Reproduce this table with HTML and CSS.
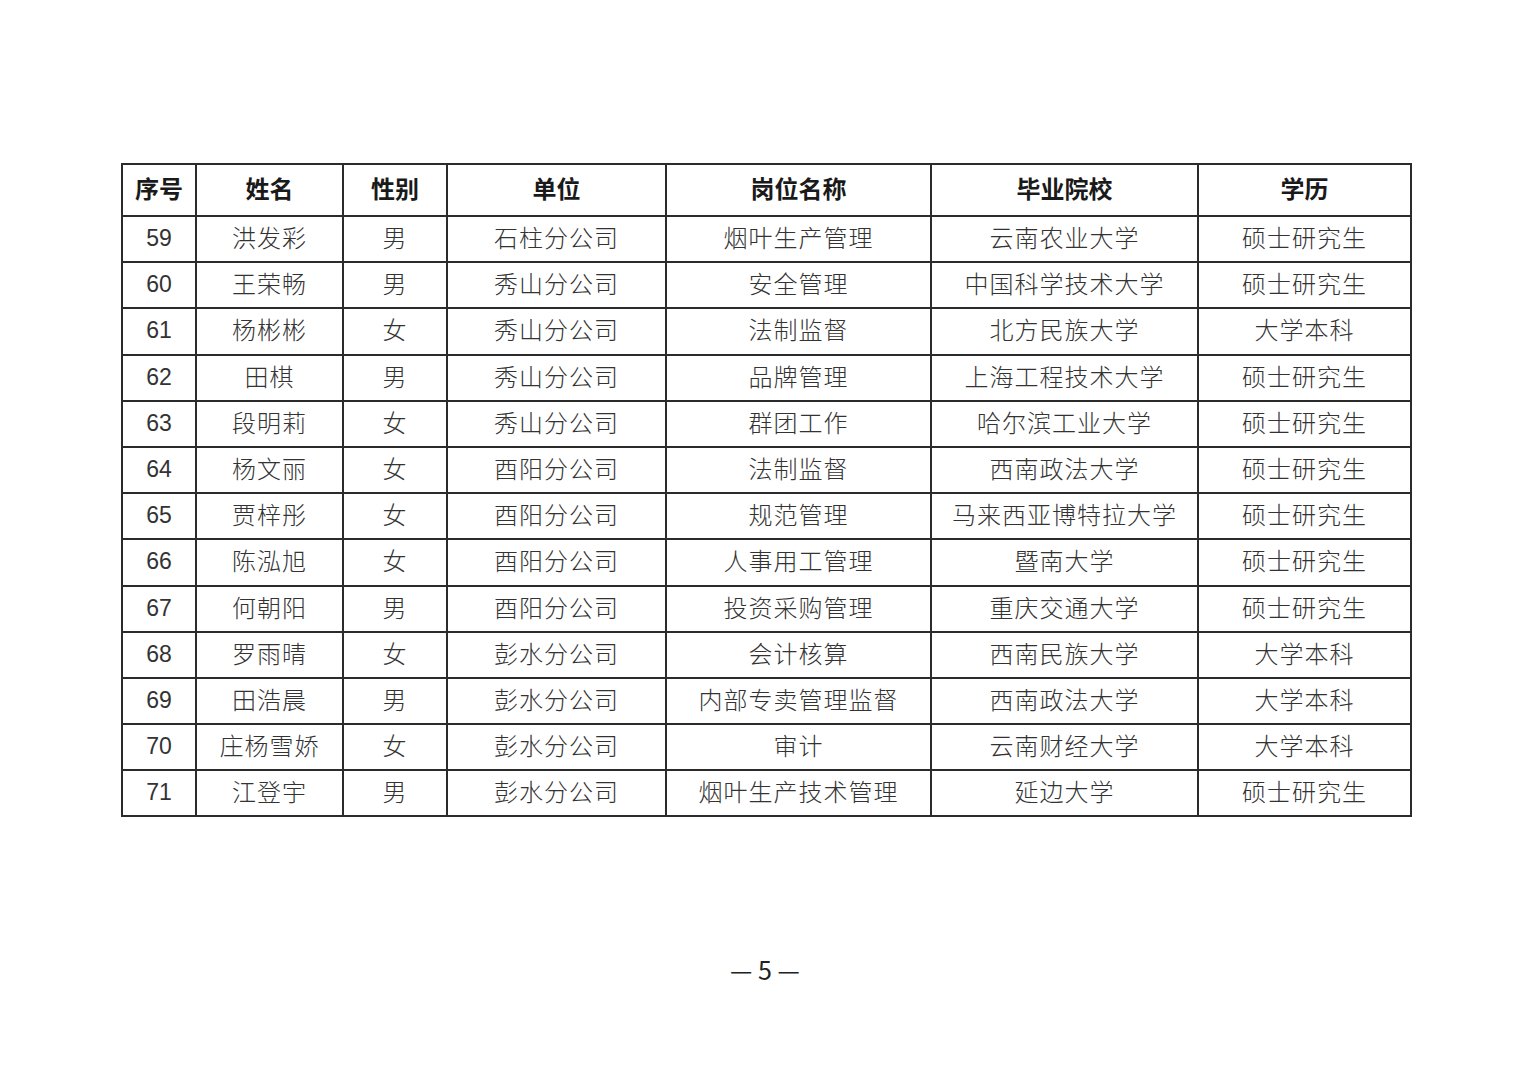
FILE: index.html
```html
<!DOCTYPE html>
<html lang="zh-CN">
<head>
<meta charset="utf-8">
<title>名单</title>
<link rel="stylesheet" href="styles.css">
</head>
<body>
<div class="page">
<table class="list">
<colgroup>
<col class="c1"><col class="c2"><col class="c3"><col class="c4"><col class="c5"><col class="c6"><col class="c7">
</colgroup>
<thead>
<tr><th>序号</th><th>姓名</th><th>性别</th><th>单位</th><th>岗位名称</th><th>毕业院校</th><th>学历</th></tr>
</thead>
<tbody>
<tr><td class="num">59</td><td>洪发彩</td><td>男</td><td>石柱分公司</td><td>烟叶生产管理</td><td>云南农业大学</td><td>硕士研究生</td></tr>
<tr><td class="num">60</td><td>王荣畅</td><td>男</td><td>秀山分公司</td><td>安全管理</td><td>中国科学技术大学</td><td>硕士研究生</td></tr>
<tr><td class="num">61</td><td>杨彬彬</td><td>女</td><td>秀山分公司</td><td>法制监督</td><td>北方民族大学</td><td>大学本科</td></tr>
<tr><td class="num">62</td><td>田棋</td><td>男</td><td>秀山分公司</td><td>品牌管理</td><td>上海工程技术大学</td><td>硕士研究生</td></tr>
<tr><td class="num">63</td><td>段明莉</td><td>女</td><td>秀山分公司</td><td>群团工作</td><td>哈尔滨工业大学</td><td>硕士研究生</td></tr>
<tr><td class="num">64</td><td>杨文丽</td><td>女</td><td>酉阳分公司</td><td>法制监督</td><td>西南政法大学</td><td>硕士研究生</td></tr>
<tr><td class="num">65</td><td>贾梓彤</td><td>女</td><td>酉阳分公司</td><td>规范管理</td><td>马来西亚博特拉大学</td><td>硕士研究生</td></tr>
<tr><td class="num">66</td><td>陈泓旭</td><td>女</td><td>酉阳分公司</td><td>人事用工管理</td><td>暨南大学</td><td>硕士研究生</td></tr>
<tr><td class="num">67</td><td>何朝阳</td><td>男</td><td>酉阳分公司</td><td>投资采购管理</td><td>重庆交通大学</td><td>硕士研究生</td></tr>
<tr><td class="num">68</td><td>罗雨晴</td><td>女</td><td>彭水分公司</td><td>会计核算</td><td>西南民族大学</td><td>大学本科</td></tr>
<tr><td class="num">69</td><td>田浩晨</td><td>男</td><td>彭水分公司</td><td>内部专卖管理监督</td><td>西南政法大学</td><td>大学本科</td></tr>
<tr><td class="num">70</td><td>庄杨雪娇</td><td>女</td><td>彭水分公司</td><td>审计</td><td>云南财经大学</td><td>大学本科</td></tr>
<tr><td class="num">71</td><td>江登宇</td><td>男</td><td>彭水分公司</td><td>烟叶生产技术管理</td><td>延边大学</td><td>硕士研究生</td></tr>
</tbody>
</table>
<div class="pageno">— 5 —</div>
</div>
</body>
</html>
```
FILE: styles.css
```css
html, body {
  margin: 0;
  padding: 0;
  background: #ffffff;
}
.page {
  width: 1529px;
  height: 1080px;
  padding-top: 163px;
  box-sizing: border-box;
  font-family: "Noto Sans CJK SC", "Noto Sans", sans-serif;
  color: #2a2a2a;
}
.list {
  margin-left: 121px;
  width: 1289px;
  border-collapse: collapse;
  table-layout: fixed;
}
.c1 { width: 74px; }
.c2 { width: 147px; }
.c3 { width: 104px; }
.c4 { width: 219px; }
.c5 { width: 265px; }
.c6 { width: 267px; }
.c7 { width: 213px; }
.list th, .list td {
  border: 2px solid #2b2b2b;
  text-align: center;
  padding: 0;
  white-space: nowrap;
}
.list th {
  height: 44px;
  padding-bottom: 6px;
  font-size: 24px;
  font-weight: 700;
  color: #1a1a1a;
  letter-spacing: 0;
}
.list td {
  height: 39.2px;
  padding-bottom: 5px;
  font-size: 24px;
  font-weight: 300;
  color: #333333;
  letter-spacing: 1px;
}
.list td.num {
  font-family: "Liberation Sans", "Noto Sans", sans-serif;
  font-weight: 400;
  letter-spacing: 0;
  font-size: 23px;
  height: 43.2px;
  padding-bottom: 1px;
}
.pageno {
  margin-top: 134px;
  text-align: center;
  font-size: 25px;
  color: #222222;
  padding-left: 1px;
}
```
